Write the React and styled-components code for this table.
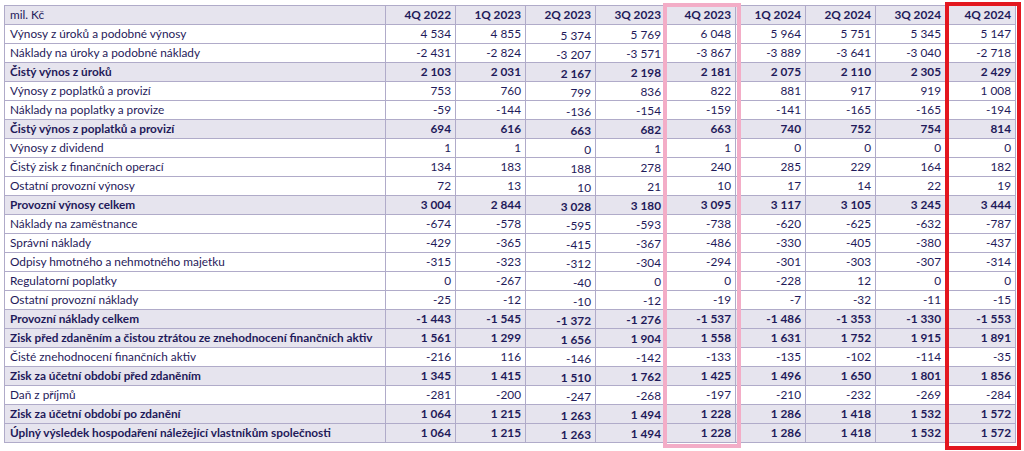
import React from "react";
import styled, { createGlobalStyle } from "styled-components";

const Global = createGlobalStyle`
  html, body { margin: 0; padding: 0; background: #ffffff; }
  body { font-family: Lato, "Noto Sans", sans-serif; }
`;

const Page = styled.div`
  width: 1024px;
  height: 451px;
  padding: 5px 0 0 4px;
  box-sizing: border-box;
  overflow: hidden;
`;

const Frame = styled.div`
  position: relative;
  width: 1011px;
`;

const Table = styled.table`
  border-collapse: collapse;
  table-layout: fixed;
  width: 1011px;
  font-size: 11.8px;
  color: #1f1a5a;
`;

const Row = styled.tr`
  height: 19px;
  background: ${(p) => (p.$strong ? "#e6e4ee" : "#ffffff")};
  font-weight: ${(p) => (p.$strong ? 700 : 400)};
`;

const Label = styled.td`
  padding: 0 5px;
  border: 1px solid #b0abc9;
  white-space: nowrap;
  line-height: 14px;
  font-weight: ${(p) => (p.$plain ? 400 : "inherit")};
  vertical-align: middle;
`;

const Num = styled.td`
  padding: ${(p) => p.$shift || 0}px 4px 0 0;
  border: 1px solid #b0abc9;
  text-align: right;
  white-space: nowrap;
  line-height: 14px;
  vertical-align: middle;
`;

const HeadNum = styled(Num)`
  font-weight: 700;
  padding-top: 0;
`;

const Highlight = styled.div`
  position: absolute;
  top: ${(p) => p.$top}px;
  bottom: ${(p) => p.$bottom}px;
  left: ${(p) => p.$left}px;
  width: ${(p) => p.$width}px;
  border: ${(p) => p.$thick}px solid ${(p) => p.$color};
  box-sizing: border-box;
  pointer-events: none;
`;

const periods = ["4Q 2022", "1Q 2023", "2Q 2023", "3Q 2023", "4Q 2023", "1Q 2024", "2Q 2024", "3Q 2024", "4Q 2024"];
const shifts = [0, 0, 3, 2, 0, 0, 0, 0, 0];

const rows = [
  ["Výnosy z úroků a podobné výnosy", false, ["4 534", "4 855", "5 374", "5 769", "6 048", "5 964", "5 751", "5 345", "5 147"]],
  ["Náklady na úroky a podobné náklady", false, ["-2 431", "-2 824", "-3 207", "-3 571", "-3 867", "-3 889", "-3 641", "-3 040", "-2 718"]],
  ["Čistý výnos z úroků", true, ["2 103", "2 031", "2 167", "2 198", "2 181", "2 075", "2 110", "2 305", "2 429"]],
  ["Výnosy z poplatků a provizí", false, ["753", "760", "799", "836", "822", "881", "917", "919", "1 008"]],
  ["Náklady na poplatky a provize", false, ["-59", "-144", "-136", "-154", "-159", "-141", "-165", "-165", "-194"]],
  ["Čistý výnos z poplatků a provizí", true, ["694", "616", "663", "682", "663", "740", "752", "754", "814"]],
  ["Výnosy z dividend", false, ["1", "1", "0", "1", "1", "0", "0", "0", "0"]],
  ["Čistý zisk z finančních operací", false, ["134", "183", "188", "278", "240", "285", "229", "164", "182"]],
  ["Ostatní provozní výnosy", false, ["72", "13", "10", "21", "10", "17", "14", "22", "19"]],
  ["Provozní výnosy celkem", true, ["3 004", "2 844", "3 028", "3 180", "3 095", "3 117", "3 105", "3 245", "3 444"]],
  ["Náklady na zaměstnance", false, ["-674", "-578", "-595", "-593", "-738", "-620", "-625", "-632", "-787"]],
  ["Správní náklady", false, ["-429", "-365", "-415", "-367", "-486", "-330", "-405", "-380", "-437"]],
  ["Odpisy hmotného a nehmotného majetku", false, ["-315", "-323", "-312", "-304", "-294", "-301", "-303", "-307", "-314"]],
  ["Regulatorní poplatky", false, ["0", "-267", "-40", "0", "0", "-228", "12", "0", "0"]],
  ["Ostatní provozní náklady", false, ["-25", "-12", "-10", "-12", "-19", "-7", "-32", "-11", "-15"]],
  ["Provozní náklady celkem", true, ["-1 443", "-1 545", "-1 372", "-1 276", "-1 537", "-1 486", "-1 353", "-1 330", "-1 553"]],
  ["Zisk před zdaněním a čistou ztrátou ze znehodnocení finančních aktiv", true, ["1 561", "1 299", "1 656", "1 904", "1 558", "1 631", "1 752", "1 915", "1 891"]],
  ["Čisté znehodnocení finančních aktiv", false, ["-216", "116", "-146", "-142", "-133", "-135", "-102", "-114", "-35"]],
  ["Zisk za účetní období před zdaněním", true, ["1 345", "1 415", "1 510", "1 762", "1 425", "1 496", "1 650", "1 801", "1 856"]],
  ["Daň z příjmů", false, ["-281", "-200", "-247", "-268", "-197", "-210", "-232", "-269", "-284"]],
  ["Zisk za účetní období po zdanění", true, ["1 064", "1 215", "1 263", "1 494", "1 228", "1 286", "1 418", "1 532", "1 572"]],
  ["Úplný výsledek hospodaření náležející vlastníkům společnosti", true, ["1 064", "1 215", "1 263", "1 494", "1 228", "1 286", "1 418", "1 532", "1 572"]],
];

export default function App() {
  return (
    <>
      <Global />
      <Page>
        <Frame>
          <Table>
            <colgroup>
              <col style={{ width: 381 }} />
              {periods.map((p) => (
                <col key={p} style={{ width: 70 }} />
              ))}
            </colgroup>
            <thead>
              <Row $strong>
                <Label $plain>mil. Kč</Label>
                {periods.map((p) => (
                  <HeadNum key={p}>{p}</HeadNum>
                ))}
              </Row>
            </thead>
            <tbody>
              {rows.map(([label, strong, vals]) => (
                <Row key={label} $strong={strong}>
                  <Label>{label}</Label>
                  {vals.map((v, i) => (
                    <Num key={i} $shift={shifts[i]}>{v}</Num>
                  ))}
                </Row>
              ))}
            </tbody>
          </Table>
          <Highlight $top={-2} $bottom={-5} $left={659} $width={78} $thick={4} $color="#f3adc7" />
          <Highlight $top={-3} $bottom={-7} $left={941} $width={76} $thick={4} $color="#e3171f" />
        </Frame>
      </Page>
    </>
  );
}
